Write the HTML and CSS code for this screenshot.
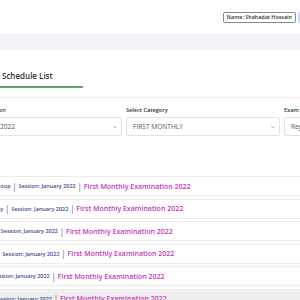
FILE: index.html
```html
<!DOCTYPE html>
<html lang="en">
<head>
    <meta charset="UTF-8">
    <meta name="viewport" content="width=device-width, initial-scale=1.0">
    <title>Exam Schedule List</title>
    <link rel="stylesheet" href="styles.css">
</head>
<body>
    <div class="topbar">
        <span class="badge">Name: Shahadat Hossain</span>
        <span class="badge badge-blue"></span>
    </div>
    <div class="band"></div>

    <div class="page">
        <div class="tabs">
            <div class="tab active">Schedule List</div>
        </div>

        <div class="filters">
            <div class="field">
                <label>Select Session</label>
                <div class="select">
                    <span>January 2022</span>
                    <svg width="6" height="4" viewBox="0 0 6 4"><path d="M1 1l2 2 2-2" fill="none" stroke="#aaa" stroke-width="0.8"/></svg>
                </div>
            </div>
            <div class="field">
                <label>Select Category</label>
                <div class="select">
                    <span>FIRST MONTHLY</span>
                    <svg width="6" height="4" viewBox="0 0 6 4"><path d="M1 1l2 2 2-2" fill="none" stroke="#aaa" stroke-width="0.8"/></svg>
                </div>
            </div>
            <div class="field">
                <label>Exam Type</label>
                <div class="select">
                    <span>Regular</span>
                    <svg width="6" height="4" viewBox="0 0 6 4"><path d="M1 1l2 2 2-2" fill="none" stroke="#aaa" stroke-width="0.8"/></svg>
                </div>
            </div>
        </div>

        <div class="list">
            <div class="row"><span class="meta">Music Group</span><span class="sep">|</span><span class="meta">Session: January 2022</span><span class="sep">|</span><span class="exam">First Monthly Examination 2022</span></div>
            <div class="row"><span class="meta">Humanity</span><span class="sep">|</span><span class="meta">Session: January 2022</span><span class="sep">|</span><span class="exam">First Monthly Examination 2022</span></div>
            <div class="row"><span class="meta">Seven</span><span class="sep">|</span><span class="meta">Session: January 2022</span><span class="sep">|</span><span class="exam">First Monthly Examination 2022</span></div>
            <div class="row"><span class="meta">Eleven</span><span class="sep">|</span><span class="meta">Session: January 2022</span><span class="sep">|</span><span class="exam">First Monthly Examination 2022</span></div>
            <div class="row"><span class="meta">Six</span><span class="sep">|</span><span class="meta">Session: January 2022</span><span class="sep">|</span><span class="exam">First Monthly Examination 2022</span></div>
            <div class="row last"><span class="meta">Ten</span><span class="sep">|</span><span class="meta">Session: January 2022</span><span class="sep">|</span><span class="exam">First Monthly Examination 2022</span></div>
        </div>
    </div>
</body>
</html>
```

FILE: styles.css
```css
body {
    font-family: "Open Sans", "Liberation Sans", sans-serif;
    background-color: #fff;
    color: #333;
    margin: 0;
    padding: 0;
    overflow: hidden;
}
.topbar {
    height: 34px;
    display: flex;
    justify-content: flex-end;
    align-items: flex-start;
    padding-top: 12px;
    box-sizing: border-box;
    gap: 2px;
    margin-right: -20px;
}
.badge {
    font-size: 5.4px;
    font-weight: 600;
    line-height: 9px;
    padding: 0 3px;
    border: 1px solid #888;
    border-radius: 2px;
    color: #333;
    background-color: #fff;
}
.badge-blue {
    background-color: #dfe5fb;
    border-color: #c9d2f5;
    width: 14px;
    height: 9px;
}
.band {
    height: 16px;
    background-color: #f3f3f7;
}
.page {
    margin-left: -32px;
    width: 520px;
}
.tabs {
    height: 48px;
    box-sizing: border-box;
    padding-top: 12px;
    border-bottom: 1px solid #eee;
}
.tab {
    display: inline-block;
    font-size: 8px;
    font-weight: 600;
    line-height: 10px;
    color: #333;
    padding: 0 30px 5px 34px;
}
.tab.active {
    border-bottom: 2px solid #5fa572;
}
.filters {
    display: flex;
    gap: 4px;
    padding-top: 8px;
}
.field {
    width: 154px;
    flex-shrink: 0;
    display: flex;
    flex-direction: column;
}
label {
    font-size: 5.6px;
    font-weight: 600;
    line-height: 8px;
    color: #333;
    margin-bottom: 3px;
}
.select {
    height: 19px;
    box-sizing: border-box;
    border: 1px solid #e2e2e2;
    border-radius: 2px;
    display: flex;
    align-items: center;
    justify-content: space-between;
    padding: 0 3px 0 6px;
    font-size: 6.6px;
    color: #555;
}
.list {
    margin-top: 40px;
    display: flex;
    flex-direction: column;
    gap: 2.6px;
}
.row {
    height: 20px;
    box-sizing: border-box;
    border: 1px solid #ececec;
    display: flex;
    align-items: center;
    padding-left: 8px;
    white-space: nowrap;
}
.row.last {
    background-color: #eeeeee;
}
.meta {
    font-size: 5.5px;
    font-weight: 600;
    color: #3b4a92;
}
.sep {
    font-size: 9px;
    color: #777;
    margin: 0 1.5px;
}
.exam {
    font-size: 7px;
    font-weight: 600;
    color: #c236b9;
}
```
